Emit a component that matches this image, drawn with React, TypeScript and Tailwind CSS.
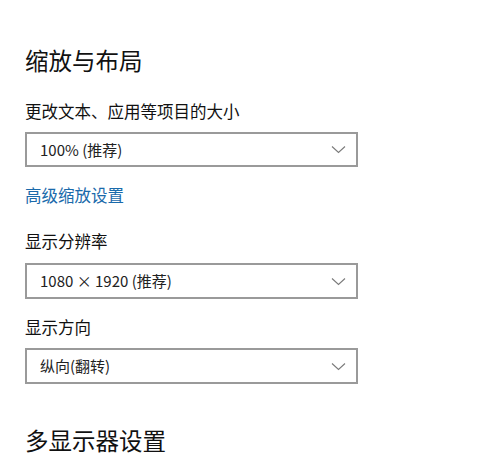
import React from 'react';

const font = { fontFamily: '"Noto Sans CJK SC", "Noto Sans", sans-serif' };

const Chevron: React.FC = () => (
  <svg width="15" height="9" viewBox="0 0 15 9" fill="none" className="shrink-0">
    <path d="M1 1.5l6.5 6 6.5-6" stroke="#7a7a7a" strokeWidth="1.1" />
  </svg>
);

const Select: React.FC<{ value: string; tall?: boolean }> = ({ value, tall }) => (
  <div
    className={`w-[333px] ${tall ? 'h-[36px]' : 'h-[35px]'} border-2 border-[#9a9a9a] bg-white flex items-center justify-between pl-[13px] pr-[10px]`}
  >
    <span className="text-[15px] leading-5 text-[#222]">{value}</span>
    <Chevron />
  </div>
);

const App: React.FC = () => {
  return (
    <div className="w-[500px] h-[474px] bg-white overflow-hidden" style={font}>
      <div className="flex flex-col items-start pl-[25px] pt-[46px]">
        <h1 className="text-[23.5px] leading-[28px] font-normal text-[#111]">缩放与布局</h1>

        <p className="mt-[27px] text-[16.5px] leading-5 text-[#111]">更改文本、应用等项目的大小</p>
        <div className="mt-[11px]">
          <Select value="100% (推荐)" />
        </div>

        <a className="mt-[18px] text-[16.5px] leading-5 text-[#1a6aab]">高级缩放设置</a>

        <p className="mt-[26px] text-[16.5px] leading-5 text-[#111]">显示分辨率</p>
        <div className="mt-[12px]">
          <Select value="1080 × 1920 (推荐)" tall />
        </div>

        <p className="mt-[18px] text-[16.5px] leading-5 text-[#111]">显示方向</p>
        <div className="mt-[11px]">
          <Select value="纵向(翻转)" tall />
        </div>

        <h2 className="mt-[42px] text-[23.5px] leading-[28px] font-normal text-[#111]">多显示器设置</h2>
      </div>
    </div>
  );
};

export default App;
